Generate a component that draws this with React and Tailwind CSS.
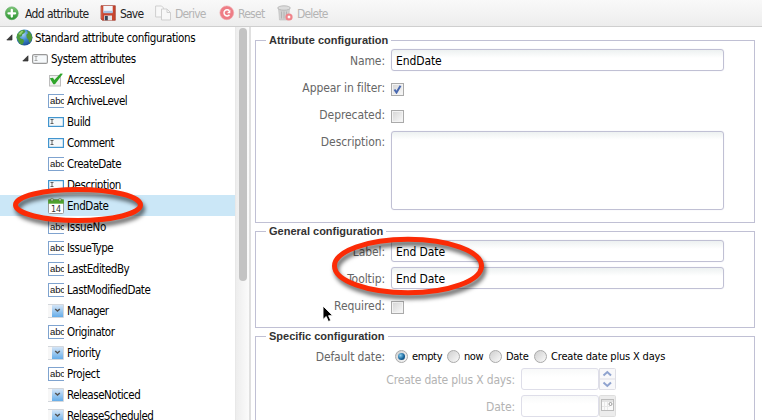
import React from "react";

const UI = "font-['DejaVu_Sans_Condensed','DejaVu_Sans',sans-serif]";

const tree = [
  ["check", "AccessLevel", "tracking-[-0.48px]"],
  ["abc", "ArchiveLevel", "tracking-[-0.48px]"],
  ["text", "Build", "tracking-[-0.51px]"],
  ["text", "Comment", "tracking-[-0.51px]"],
  ["abc", "CreateDate", "tracking-[-0.51px]"],
  ["text", "Description", "tracking-[-0.45px]"],
  ["calendar", "EndDate", "tracking-[-0.43px]"],
  ["abc", "IssueNo", "tracking-[-0.25px]"],
  ["abc", "IssueType", "tracking-[-0.45px]"],
  ["abc", "LastEditedBy", "tracking-[-0.46px]"],
  ["abc", "LastModifiedDate", "tracking-[-0.44px]"],
  ["combo", "Manager", "tracking-[-0.55px]"],
  ["abc", "Originator", "tracking-[-0.48px]"],
  ["combo", "Priority", "tracking-[-0.4px]"],
  ["abc", "Project", "tracking-[-0.4px]"],
  ["combo", "ReleaseNoticed", "tracking-[-0.48px]"],
  ["combo", "ReleaseScheduled", "tracking-[-0.51px]"],
];

function AddIcon() {
  return (
    <svg className="h-4 w-4 shrink-0" viewBox="0 0 16 16">
      <defs>
        <linearGradient id="add" x1="0" y1="0" x2="0" y2="1">
          <stop offset="0" stopColor="#7cc576" />
          <stop offset="1" stopColor="#2c9431" />
        </linearGradient>
      </defs>
      <circle cx="7.800" cy="8.300" r="6.400" fill="url(#add)" stroke="#58a85a" strokeWidth=".7" />
      <path d="M7.800 5v6.600M4.500 8.300h6.600" stroke="#fff" strokeWidth="2.300" strokeLinecap="round" />
    </svg>
  );
}

function SaveIcon() {
  return (
    <svg className="h-4 w-4 shrink-0" viewBox="0 0 16 16">
      <path d="M1 .7h14.300v14.600H2.300L1 14z" fill="#c8452f" stroke="#a03a2c" strokeWidth=".7" />
      <path d="M3.300 1h9.400v6.200H3.300z" fill="#f3f6fa" />
      <path d="M3.300 5.800h9.400v2.400H3.300z" fill="#a9c2e2" />
      <path d="M4 10.500h8v4.800H4z" fill="#dfe3e8" />
      <path d="M4.800 11h3v4.300h-3z" fill="#3a4656" />
      <path d="M1.800 1.500v12" stroke="#e57b63" strokeWidth=".7" />
    </svg>
  );
}

function DeriveIcon() {
  return (
    <svg className="h-4 w-4 shrink-0" viewBox="0 0 16 16" fill="#f8f8f8" stroke="#cfcfcf">
      <path d="M.6 1h6l2 2v9h-8z" />
      <path d="M6.500 4h5.500l3.500 3.500v7.500h-9z" />
      <path d="M12 4v3.500h3.500" fill="none" />
    </svg>
  );
}

function ResetIcon() {
  return (
    <svg className="h-4 w-4 shrink-0" viewBox="0 0 16 16">
      <circle cx="7.800" cy="7.800" r="6.900" fill="#ee7d86" stroke="#f0a3a8" strokeWidth=".6" />
      <path d="M10.300 5.600a3.100 3.100 0 1 0 .2 4.200" fill="none" stroke="#fff" strokeWidth="1.500" />
      <path d="M11.300 4.700v3.600H7.900z" fill="#fff" />
    </svg>
  );
}

function DeleteIcon() {
  return (
    <svg className="h-4 w-4 shrink-0" viewBox="0 0 16 16">
      <path d="M1.500 3.500h11l-1 11.500h-9z" fill="#d0d0d0" stroke="#bdbdbd" strokeWidth=".6" />
      <ellipse cx="7" cy="3" rx="6.300" ry="2.200" fill="#dcdcdc" stroke="#b0b0b0" strokeWidth=".8" />
      <path d="M4.500 6.500v7M7 6.500v7M9.500 6.500v4" stroke="#b0b0b0" strokeWidth=".9" />
      <circle cx="12" cy="12" r="3.600" fill="#f0838a" />
      <path d="m10.900 10.900 2.200 2.200m0-2.200-2.200 2.200" stroke="#fff" strokeWidth="1.200" />
    </svg>
  );
}

function GlobeIcon() {
  return (
    <svg className="h-[17px] w-[17px] shrink-0" viewBox="0 0 17 17">
      <defs>
        <radialGradient id="globe" cx=".4" cy=".3" r=".75">
          <stop offset="0" stopColor="#a8d2f3" />
          <stop offset=".5" stopColor="#3c86cf" />
          <stop offset="1" stopColor="#1a4b90" />
        </radialGradient>
      </defs>
      <circle cx="8.500" cy="8.500" r="8" fill="url(#globe)" />
      <path d="M4.300 1.700 8 .7l1.500 1.500-1.300 2-1.800 1-.6 2L3.500 8 5 9.800l2.300.5.8 2-1.700 3.500L4 15 2.500 12.500.6 8.800l.5-3.500z" fill="#4c9c3c" />
      <path d="m11 1.500 2.500 1.200 1.800 2.500 1 3.500-1.300 3.600-1.800 1.500-.7-3-1.700-2-.5-3 1.700-1.500z" fill="#52983a" />
      <path d="m2.300 5 3-3 2 .1-1.200 2-2 1.900z" fill="#98cf75" />
    </svg>
  );
}

function Expander() {
  return (
    <svg className="h-[7px] w-[7px] shrink-0" viewBox="0 0 7 7">
      <path d="M6 .8v5.200H.8z" fill="#404040" stroke="#2e2e2e" strokeWidth=".7" />
    </svg>
  );
}

function TextFieldIcon({ gray }) {
  const c = gray ? "#999" : "#4295cf";
  return (
    <svg className="h-4 w-4 shrink-0" viewBox="0 0 16 16">
      <rect x=".6" y="3.600" width="14.800" height="8.800" rx={gray ? 1.5 : 0} fill="#f6f9fb" stroke={c} strokeWidth="1.200" />
      <path d="M2.500 5.500h3M4 5.500v4M2.500 9.500h3" stroke={gray ? "#999" : "#444"} strokeWidth=".8" fill="none" />
    </svg>
  );
}

function AbcIcon() {
  return (
    <span className="flex h-[14px] w-4 shrink-0 items-center overflow-hidden border-y border-l border-[#7fa3cf] bg-white pt-px pl-px font-['Liberation_Sans',sans-serif] text-[9.5px] leading-none tracking-[-0.1px] text-[#111]">
      abc
    </span>
  );
}

function CheckIcon() {
  return (
    <svg className="h-4 w-4 shrink-0" viewBox="0 0 16 16">
      <rect x="1.500" y="3.500" width="11" height="10.500" fill="#f1f1f1" stroke="#bdbdbd" />
      <path d="M1.800 6.200 5 5.800l1.300 2.300L12.500 1.500l2.400.2L7 12.200H5.300z" fill="#2fa52b" />
    </svg>
  );
}

function CalendarIcon() {
  return (
    <svg className="h-4 w-4 shrink-0" viewBox="0 0 16 16">
      <rect x=".5" y="1.500" width="15" height="14" rx="1" fill="#fff" stroke="#9a9a9a" />
      <path d="M.2 1.500h15.600v4.200H.2z" fill="#4fa22e" />
      <path d="M3 .3h2v2.500H3zM11 .3h2v2.500h-2z" fill="#dfead8" stroke="#5b7b4c" strokeWidth=".5" />
      <text x="8" y="13.500" textAnchor="middle" fontSize="8" fontFamily="DejaVu Sans" fill="#333">14</text>
    </svg>
  );
}

function ComboIcon() {
  return (
    <svg className="h-4 w-4 shrink-0" viewBox="0 0 16 16">
      <defs>
        <linearGradient id="combo" x1="0" y1="0" x2="0" y2="1">
          <stop offset="0" stopColor="#d4e5f7" />
          <stop offset="1" stopColor="#65ade9" />
        </linearGradient>
      </defs>
      <path d="M0 1.500h15.500v13H0" fill="#f7f7f7" stroke="#d3d7dc" />
      <rect x="4" y="2" width="11" height="12" fill="url(#combo)" />
      <path d="m7.200 6 2.300 2L11.800 6" fill="none" stroke="#555" strokeWidth="1.500" />
    </svg>
  );
}

const icons = { check: CheckIcon, abc: AbcIcon, text: TextFieldIcon, calendar: CalendarIcon, combo: ComboIcon };

function Toolbar() {
  const label = "whitespace-nowrap pt-[2px] text-[12px] leading-none";
  return (
    <div className="flex h-[27px] shrink-0 items-center border-b border-[#cfcfcf] bg-linear-to-b from-[#f9f9f9] to-[#ededed] pl-[4px] text-[#222]">
      <AddIcon />
      <span className={`${label} ml-[5px] w-[75px] tracking-[-0.6px]`}>Add attribute</span>
      <SaveIcon />
      <span className={`${label} ml-[4px] w-[35px] tracking-[-0.8px]`}>Save</span>
      <DeriveIcon />
      <span className={`${label} ml-[4px] w-[44px] tracking-[-0.8px] text-[#b4b4b4]`}>Derive</span>
      <ResetIcon />
      <span className={`${label} ml-[3px] w-[39px] tracking-[-0.75px] text-[#b4b4b4]`}>Reset</span>
      <DeleteIcon />
      <span className={`${label} ml-[4px] tracking-[-0.8px] text-[#b4b4b4]`}>Delete</span>
    </div>
  );
}

function Tree() {
  const text = "whitespace-nowrap pt-[2px] text-[11.5px] leading-none text-black";
  return (
    <div className="flex w-[235px] shrink-0 flex-col overflow-hidden bg-white">
      <div className="flex h-[21px] shrink-0 items-center pl-[6px]">
        <Expander />
        <span className="ml-[3px]"><GlobeIcon /></span>
        <span className={`${text} ml-[2px] tracking-[-0.38px]`}>Standard attribute configurations</span>
      </div>
      <div className="flex h-[21px] shrink-0 items-center pl-[22px]">
        <Expander />
        <span className="ml-[3px]"><TextFieldIcon gray /></span>
        <span className={`${text} ml-[3px] tracking-[-0.45px]`}>System attributes</span>
      </div>
      {tree.map(([kind, name, tracking]) => {
        const Icon = icons[kind];
        return (
          <div key={name} className={`flex h-[21px] shrink-0 items-center gap-[3px] pl-[48px] ${name === "EndDate" ? "bg-[#cbe7f7]" : ""}`}>
            <Icon />
            <span className={`${text} ${tracking}`}>{name}</span>
          </div>
        );
      })}
    </div>
  );
}

function Group({ title, className, children }) {
  return (
    <section className={`shrink-0 border border-[#c0c0d4] ${className}`}>
      <h2 className="-mt-[6px] ml-[10px] h-[11px] w-fit bg-white px-[3px] font-['Liberation_Sans',Arial,sans-serif] text-[11px] leading-[11px] font-bold whitespace-nowrap text-[#333]">
        {title}
      </h2>
      {children}
    </section>
  );
}

function Label({ children, className = "tracking-[-0.08px]" }) {
  return <span className={`mt-[5px] mr-[6px] w-[129px] text-right text-[12px] leading-[14px] whitespace-nowrap text-[#666] ${className}`}>{children}</span>;
}

const field = "rounded-[3px] border border-[#c0c0d4] bg-linear-to-b from-[#edf1f1] to-white to-[8px] shadow-[0_0_1px_#d5d5e5]";

function Input({ value }) {
  return <div className={`flex h-[22px] w-[333px] items-center pt-[2px] pl-[4px] text-[12px] leading-none tracking-[-0.1px] text-black ${field}`}>{value}</div>;
}

function Checkbox({ checked }) {
  return (
    <span className="mt-[7px] flex h-[13px] w-[13px] items-center justify-center border border-[#aaa] bg-linear-to-br from-[#d4d4d4] to-[#fafafa] shadow-[inset_0_0_0_1px_#f3f3f3]">
      {checked && (
        <svg className="h-[9px] w-[9px]" viewBox="0 0 9 9">
          <path d="m1.500 4.500 2 3L7.500.8" fill="none" stroke="#4868b0" strokeWidth="2" />
        </svg>
      )}
    </span>
  );
}

function Radio({ checked }) {
  return (
    <span className="flex h-[13px] w-[13px] shrink-0 items-center justify-center rounded-full border border-[#aaa] bg-linear-to-br from-[#cfcfcf] to-[#fafafa]">
      {checked && <span className="h-[7px] w-[7px] rounded-full bg-[radial-gradient(circle_at_35%_35%,#8bd0f0,#17659c_55%,#0b3557)]" />}
    </span>
  );
}

function Form() {
  const row = "flex h-[27px] items-start";
  const option = "pt-px text-[11px] leading-none whitespace-nowrap text-black";
  const dim = "mt-[5px] mr-[6px] w-[259px] text-right text-[12px] leading-[14px] whitespace-nowrap text-[#b3b3b3]";
  const dimField = "h-[22px] w-[78px] rounded-[3px] border border-[#dedee9] bg-linear-to-b from-[#f8f9f9] to-white to-[8px]";
  return (
    <div className="flex min-w-0 grow flex-col overflow-hidden bg-white pt-[13px] pl-[4px]">
      <Group title="Attribute configuration" className="h-[183px] w-[500px]">
        <div className={`${row} mt-[3px]`}><Label>Name:</Label><Input value="EndDate" /></div>
        <div className={row}><Label>Appear in filter:</Label><Checkbox checked /></div>
        <div className={row}><Label>Deprecated:</Label><Checkbox /></div>
        <div className="flex items-start"><Label>Description:</Label><div className={`mt-px h-[79px] w-[333px] ${field}`} /></div>
      </Group>
      <Group title="General configuration" className="mt-[8px] h-[97px] w-[500px]">
        <div className={`${row} mt-[3px]`}><Label>Label:</Label><Input value="End Date" /></div>
        <div className={row}><Label>Tooltip:</Label><Input value="End Date" /></div>
        <div className={row}><Label>Required:</Label><Checkbox /></div>
      </Group>
      <Group title="Specific configuration" className="mt-[8px] h-[120px] w-[500px]">
        <div className="mt-[3px] flex h-[22px] items-center">
          <span className="mr-[10px] w-[129px] pt-[2px] text-right text-[12px] leading-none tracking-[-0.12px] whitespace-nowrap text-[#666]">Default date:</span>
          <Radio checked />
          <span className={`${option} ml-[4px] w-[35px] tracking-[-0.3px]`}>empty</span>
          <Radio />
          <span className={`${option} ml-[4px] w-[25px] tracking-[-0.4px]`}>now</span>
          <Radio />
          <span className={`${option} ml-[4px] w-[28px] tracking-[-0.3px]`}>Date</span>
          <Radio />
          <span className={`${option} ml-[4px] tracking-[-0.18px]`}>Create date plus X days</span>
        </div>
        <div className={`${row} mt-px`}>
          <span className={`${dim} tracking-[-0.17px]`}>Create date plus X days:</span>
          <div className={dimField} />
          <svg className="h-[22px] w-[17px]" viewBox="0 0 17 22">
            <path d="M.5.5h15a1 1 0 0 1 1 1v19a1 1 0 0 1-1 1H.5zM.5 11h16" fill="#f8f8fa" stroke="#dedee5" />
            <path d="M4.500 7.500 8.300 4 12 7.500M4.500 14.500l3.800 3.500 3.700-3.500" fill="none" stroke="#8fa3cf" strokeWidth="2" />
          </svg>
        </div>
        <div className={row}>
          <span className={`${dim} tracking-[-0.1px]`}>Date:</span>
          <div className={dimField} />
          <svg className="h-[22px] w-[17px]" viewBox="0 0 17 22">
            <rect x=".5" y=".5" width="16" height="21" rx="1" fill="#ececec" stroke="#dedede" />
            <rect x="2.500" y="4.500" width="12" height="11" fill="#fafafa" stroke="#bcbcbc" />
            <path d="M3 6h11" stroke="#ccc" />
            <path d="M5.500 7v8M8.500 7v8M3 11.500h8" stroke="#e8e8e8" />
            <circle cx="11.500" cy="9" r="1.500" fill="#fff" stroke="#999" />
          </svg>
        </div>
      </Group>
    </div>
  );
}

function Annotations() {
  return (
    <svg className="pointer-events-none absolute inset-0 h-[420px] w-[762px]" viewBox="0 0 762 420">
      <g fill="none" stroke="#fb2b06" strokeWidth="5" className="drop-shadow-[2px_4px_2px_rgba(0,0,0,0.6)]">
        <ellipse cx="78" cy="205" rx="62.500" ry="15.500" />
        <ellipse cx="408" cy="266" rx="73.500" ry="26.700" />
      </g>
      <path d="M323 306v13.500l3.200-3 2.200 5 2.400-1-2.200-4.800h4.200z" fill="#000" stroke="#fff" strokeWidth=".9" />
    </svg>
  );
}

export default function App() {
  return (
    <div className={`relative flex h-[420px] w-[762px] flex-col overflow-hidden bg-white ${UI}`}>
      <Toolbar />
      <div className="flex min-h-0 grow">
        <Tree />
        <div className="flex w-[14px] shrink-0 justify-center border-l border-[#e8e8e8] bg-linear-to-r from-[#ededed] to-[#fbfbfb] pt-px">
          <div className="h-[253px] w-[8px] rounded-full bg-[#c3c3c3]" />
        </div>
        <div className="w-[2px] shrink-0 bg-[#e0e0e0]" />
        <Form />
      </div>
      <Annotations />
    </div>
  );
}
